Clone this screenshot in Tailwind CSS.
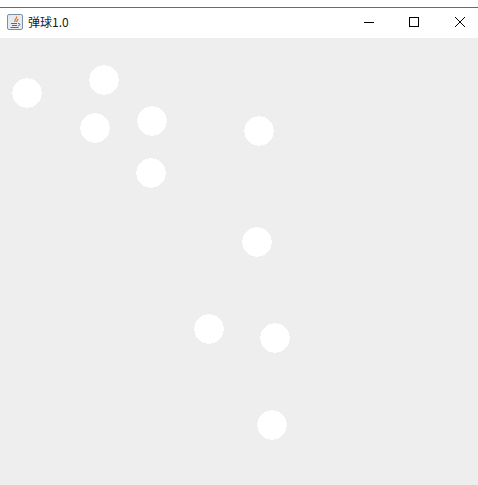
<!DOCTYPE html>
<html lang="en">
<head>
    <meta charset="UTF-8">
    <title>弹球1.0</title>
    <script src="https://cdn.jsdelivr.net/npm/@tailwindcss/browser@4"></script>
</head>
<body class="bg-white w-[478px] h-[485px] overflow-hidden flex flex-col font-['Noto_Sans_CJK_SC','Liberation_Sans',sans-serif]">
    <div class="h-[7px] bg-white"></div>
    <div class="h-px bg-[#2b7bb9]"></div>
    <header class="h-[30px] bg-white flex items-center pb-[2px]">
        <svg class="ml-[7px] w-4 h-4" viewBox="0 0 16 16">
            <rect x="0.5" y="0.5" width="15" height="15" rx="1.5" fill="#e6ebf1" stroke="#7d8fa5"/>
            <path d="M9.500 2.500C10.500 4.500 7 5.500 8 8M11 5C11 6.500 9.500 6.500 9.800 8" fill="none" stroke="#e2761b" stroke-width="1.300"/>
            <path d="M4 9.500H10M5 11.500H10M3.500 13.500H11.500" stroke="#4d6f96" stroke-width="1"/>
            <path d="M11 9.500C13.500 9 13.500 11.500 11 12" fill="none" stroke="#4d6f96" stroke-width="1"/>
        </svg>
        <span class="ml-[5px] text-[12px] leading-none text-[#1a1a1a]">弹球1.0</span>
        <div class="ml-auto flex items-center gap-[35px] pr-[13px]">
            <svg class="w-[10px] h-[10px]" viewBox="0 0 10 10"><path d="M0 5.500H10" stroke="#000" stroke-width="1"/></svg>
            <svg class="w-[10px] h-[10px]" viewBox="0 0 10 10"><rect x="0.500" y="0.500" width="9" height="9" fill="none" stroke="#000"/></svg>
            <svg class="ml-px w-[10px] h-[10px]" viewBox="0 0 10 10"><path d="M0 0L10 10M10 0L0 10" stroke="#000" stroke-width="1"/></svg>
        </div>
    </header>
    <main class="relative flex-1 bg-[#eeeeee]">
        <svg class="absolute left-[12px] top-[40px] w-[30px] h-[30px] [shape-rendering:crispEdges]" viewBox="0 0 30 30"><circle cx="15" cy="15" r="14.700" fill="#fff"/></svg>
        <svg class="absolute left-[89px] top-[27px] w-[30px] h-[30px] [shape-rendering:crispEdges]" viewBox="0 0 30 30"><circle cx="15" cy="15" r="14.700" fill="#fff"/></svg>
        <svg class="absolute left-[80px] top-[75px] w-[30px] h-[30px] [shape-rendering:crispEdges]" viewBox="0 0 30 30"><circle cx="15" cy="15" r="14.700" fill="#fff"/></svg>
        <svg class="absolute left-[137px] top-[68px] w-[30px] h-[30px] [shape-rendering:crispEdges]" viewBox="0 0 30 30"><circle cx="15" cy="15" r="14.700" fill="#fff"/></svg>
        <svg class="absolute left-[244px] top-[78px] w-[30px] h-[30px] [shape-rendering:crispEdges]" viewBox="0 0 30 30"><circle cx="15" cy="15" r="14.700" fill="#fff"/></svg>
        <svg class="absolute left-[136px] top-[120px] w-[30px] h-[30px] [shape-rendering:crispEdges]" viewBox="0 0 30 30"><circle cx="15" cy="15" r="14.700" fill="#fff"/></svg>
        <svg class="absolute left-[242px] top-[189px] w-[30px] h-[30px] [shape-rendering:crispEdges]" viewBox="0 0 30 30"><circle cx="15" cy="15" r="14.700" fill="#fff"/></svg>
        <svg class="absolute left-[194px] top-[276px] w-[30px] h-[30px] [shape-rendering:crispEdges]" viewBox="0 0 30 30"><circle cx="15" cy="15" r="14.700" fill="#fff"/></svg>
        <svg class="absolute left-[260px] top-[285px] w-[30px] h-[30px] [shape-rendering:crispEdges]" viewBox="0 0 30 30"><circle cx="15" cy="15" r="14.700" fill="#fff"/></svg>
        <svg class="absolute left-[257px] top-[372px] w-[30px] h-[30px] [shape-rendering:crispEdges]" viewBox="0 0 30 30"><circle cx="15" cy="15" r="14.700" fill="#fff"/></svg>
    </main>
</body>
</html>
